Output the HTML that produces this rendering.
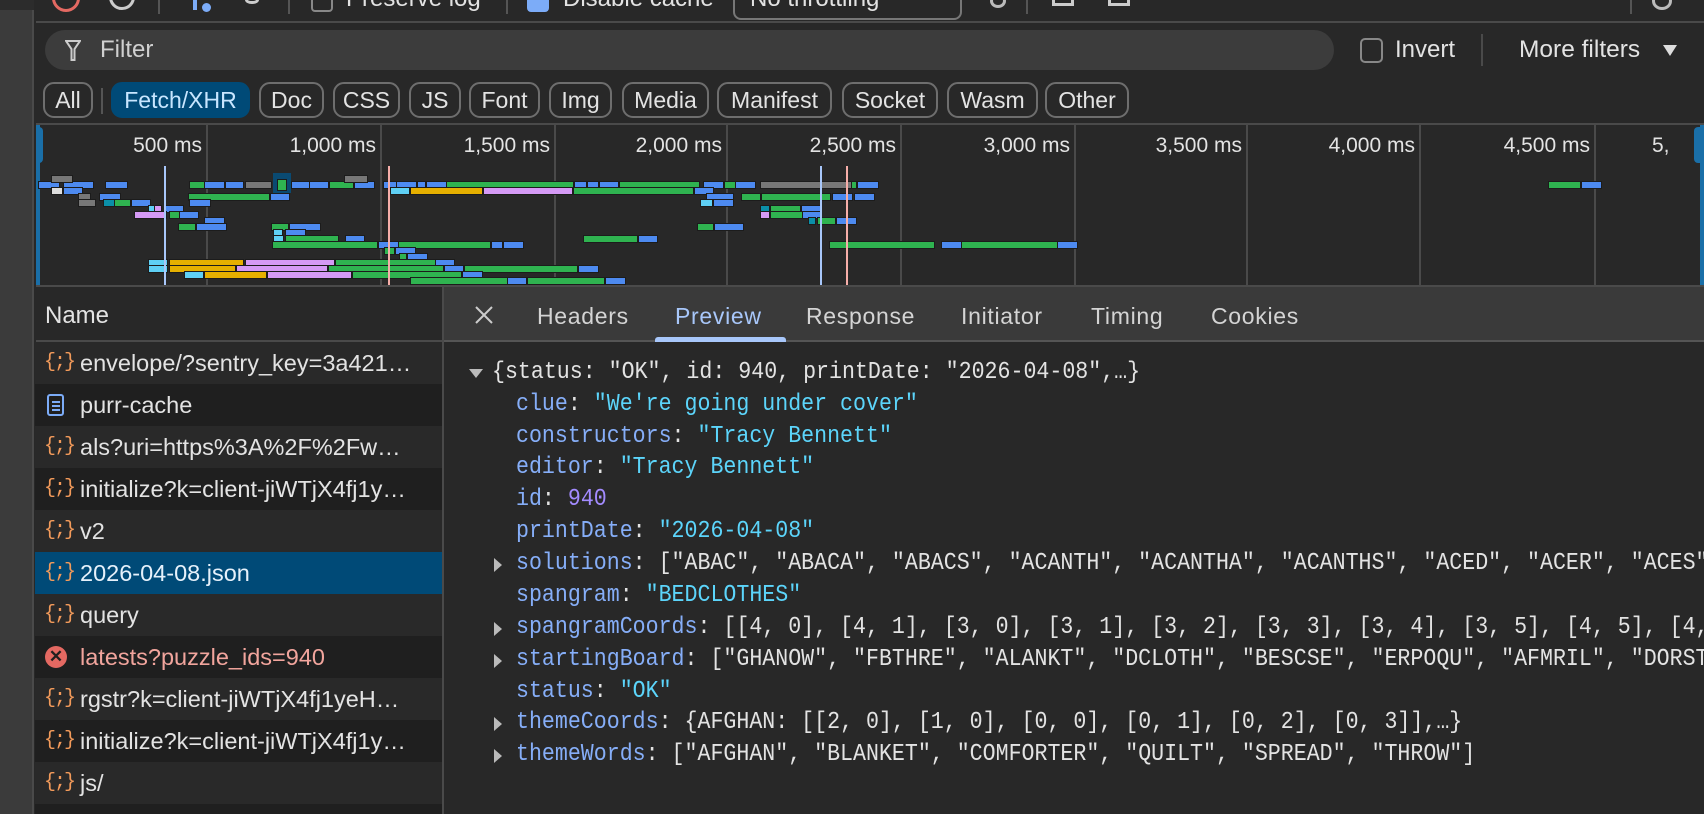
<!DOCTYPE html>
<html><head><meta charset="utf-8"><style>
*{box-sizing:border-box;margin:0;padding:0}
html,body{width:1704px;height:814px;overflow:hidden}
body{background:#282828;font-family:"Liberation Sans",sans-serif;color:#e3e3e3;position:relative}
.a{position:absolute}
.chip{position:absolute;top:82px;height:36px;border:2px solid #6e6e6e;border-radius:11px;font-size:23px;line-height:32px;text-align:center;color:#e3e3e3;white-space:nowrap}
.tl{position:absolute;top:125px;width:2px;height:161px;background:#4a4a4a}
.lab{position:absolute;top:134px;font-size:21px;text-align:right;width:130px;color:#e3e3e3}
.b{position:absolute;height:6px;outline:1px solid #1c1c1c}
.B{background:#4d8af0}.G{background:#2fb350}.C{background:#5fd0f5}.Y{background:#e6b000}.P{background:#d59af5}.R{background:#777}.T{background:#0b8fa8}.W{background:#ddd}
.row{position:absolute;left:35px;width:408px;height:42px;font-size:23.5px;line-height:42px;white-space:nowrap;overflow:hidden}
.row span.i{position:absolute;left:9px;top:0;color:#f29a5a;font-size:20px;font-family:"Liberation Mono",monospace;letter-spacing:-2px}
.row span.t{position:absolute;left:45px}
.tab{position:absolute;top:303px;font-size:23px;letter-spacing:0.7px;color:#d4d4d4}
.j{position:absolute;left:516px;font-family:"Liberation Mono",monospace;font-size:24px;white-space:nowrap;line-height:32px;transform:scaleX(0.9);transform-origin:0 0}
.k{color:#86aef8}.s{color:#5cd5fb}.n{color:#a38bff}
.tri{position:absolute;left:494px;width:0;height:0;border-top:7px solid transparent;border-bottom:7px solid transparent;border-left:8px solid #bbb}
</style></head><body>
<div class="a" style="left:0;top:0;width:34px;height:814px;background:#3b3b3b;border-right:2px solid #4a4a4a"></div>
<div class="a" style="left:0;top:0;width:34px;height:10px;background:#2c2c2c"></div>
<div class="a" style="left:36px;top:0;width:1668px;height:23px;background:#282828;border-bottom:2px solid #4a4a4a"></div>
<div class="a" style="left:52px;top:-16px;width:28px;height:28px;border:3px solid #e46962;border-radius:50%"></div>
<div class="a" style="left:109px;top:-16px;width:26px;height:26px;border:3px solid #ccc;border-radius:50%"></div>
<div class="a" style="left:158px;top:0;width:2px;height:14px;background:#555"></div>
<div class="a" style="left:193px;top:-2px;width:4px;height:12px;background:#7cacf8"></div>
<div class="a" style="left:202px;top:3px;width:9px;height:9px;background:#7cacf8;border-radius:50%"></div>
<div class="a" style="left:245px;top:-4px;width:14px;height:8px;border:3px solid #ccc;border-radius:50%"></div>
<div class="a" style="left:288px;top:0;width:2px;height:14px;background:#555"></div>
<div class="a" style="left:311px;top:-10px;width:22px;height:22px;border:2px solid #888;border-radius:4px"></div>
<div class="a" style="left:346px;top:-15px;font-size:24px">Preserve log</div>
<div class="a" style="left:506px;top:0;width:2px;height:14px;background:#555"></div>
<div class="a" style="left:527px;top:-10px;width:22px;height:22px;background:#7cacf8;border-radius:4px"></div>
<div class="a" style="left:563px;top:-15px;font-size:24px">Disable cache</div>
<div class="a" style="left:733px;top:-10px;width:229px;height:30px;border:2px solid #777;border-radius:8px"></div>
<div class="a" style="left:750px;top:-15px;font-size:24px">No throttling</div>
<div class="a" style="left:990px;top:-6px;width:16px;height:14px;border:3px solid #bbb;border-radius:50%"></div>
<div class="a" style="left:1026px;top:0;width:2px;height:14px;background:#555"></div>
<div class="a" style="left:1052px;top:-4px;width:22px;height:10px;border:3px solid #ccc;border-top:none"></div>
<div class="a" style="left:1108px;top:-4px;width:22px;height:10px;border:3px solid #ccc;border-top:none"></div>
<div class="a" style="left:1630px;top:0;width:2px;height:14px;background:#555"></div>
<div class="a" style="left:1652px;top:-8px;width:20px;height:18px;border:3px solid #bbb;border-radius:50%"></div>
<div class="a" style="left:45px;top:30px;width:1289px;height:40px;background:#3c3c3c;border-radius:20px"></div>
<svg class="a" style="left:65px;top:40px" width="16" height="22" viewBox="0 0 16 22"><path d="M1 1h14l-5.5 8v11h-3V9z" fill="none" stroke="#ccc" stroke-width="2"/></svg>
<div class="a" style="left:100px;top:36px;font-size:24px;color:#d0d0d0">Filter</div>
<div class="a" style="left:1360px;top:38px;width:23px;height:25px;border:2px solid #888;border-radius:5px"></div>
<div class="a" style="left:1395px;top:36px;font-size:24px">Invert</div>
<div class="a" style="left:1481px;top:34px;width:2px;height:32px;background:#4a4a4a"></div>
<div class="a" style="left:1519px;top:36px;font-size:24.5px">More filters</div>
<div class="a" style="left:1663px;top:45px;border-left:7px solid transparent;border-right:7px solid transparent;border-top:11px solid #ddd"></div>
<div class="chip" style="left:43px;width:50px">All</div>
<div class="a" style="left:101px;top:88px;width:2px;height:26px;background:#555"></div>
<div class="chip" style="left:111px;width:139px;background:#004a77;border-color:#004a77;color:#c8e6ff">Fetch/XHR</div>
<div class="chip" style="left:259px;width:65px">Doc</div>
<div class="chip" style="left:333px;width:67px">CSS</div>
<div class="chip" style="left:409px;width:52px">JS</div>
<div class="chip" style="left:469px;width:71px">Font</div>
<div class="chip" style="left:549px;width:63px">Img</div>
<div class="chip" style="left:622px;width:87px">Media</div>
<div class="chip" style="left:717px;width:115px">Manifest</div>
<div class="chip" style="left:842px;width:96px">Socket</div>
<div class="chip" style="left:947px;width:91px">Wasm</div>
<div class="chip" style="left:1045px;width:84px">Other</div>
<div class="a" style="left:36px;top:123px;width:1668px;height:2px;background:#4a4a4a"></div>
<div class="tl" style="left:206px"></div><div class="tl" style="left:380px"></div><div class="tl" style="left:554px"></div><div class="tl" style="left:726px"></div><div class="tl" style="left:900px"></div><div class="tl" style="left:1074px"></div><div class="tl" style="left:1246px"></div><div class="tl" style="left:1419px"></div><div class="tl" style="left:1594px"></div>
<div class="lab" style="left:72px">500 ms</div><div class="lab" style="left:246px">1,000 ms</div><div class="lab" style="left:420px">1,500 ms</div><div class="lab" style="left:592px">2,000 ms</div><div class="lab" style="left:766px">2,500 ms</div><div class="lab" style="left:940px">3,000 ms</div><div class="lab" style="left:1112px">3,500 ms</div><div class="lab" style="left:1285px">4,000 ms</div><div class="lab" style="left:1460px">4,500 ms</div>
<div class="a" style="left:1652px;top:134px;font-size:21px">5,</div>
<div class="a" style="left:36px;top:125px;width:4px;height:161px;background:#1a6fa8"></div>
<div class="a" style="left:36px;top:127px;width:7px;height:36px;background:#1a6fa8;border-radius:0 4px 4px 0"></div>
<div class="a" style="left:1694px;top:127px;width:10px;height:36px;background:#1a6fa8;border-radius:4px 0 0 4px"></div>
<div class="a" style="left:1700px;top:125px;width:4px;height:161px;background:#1a6fa8"></div>
<div class="a" style="left:273px;top:173px;width:18px;height:20px;background:#0a4a72"></div>
<div class="b B" style="left:39px;top:182px;width:20px"></div><div class="b B" style="left:64px;top:182px;width:29px"></div><div class="b B" style="left:106px;top:182px;width:21px"></div><div class="b G" style="left:190px;top:182px;width:14px"></div><div class="b B" style="left:205px;top:182px;width:19px"></div><div class="b B" style="left:226px;top:182px;width:17px"></div><div class="b R" style="left:246px;top:182px;width:25px"></div><div class="b G" style="left:278px;top:180px;width:8px;height:10px"></div><div class="b B" style="left:292px;top:182px;width:17px"></div><div class="b B" style="left:310px;top:182px;width:18px"></div><div class="b G" style="left:330px;top:182px;width:23px"></div><div class="b B" style="left:355px;top:182px;width:19px"></div><div class="b B" style="left:384px;top:182px;width:12px"></div><div class="b B" style="left:397px;top:182px;width:19px"></div><div class="b B" style="left:418px;top:182px;width:7px"></div><div class="b B" style="left:427px;top:182px;width:19px"></div><div class="b G" style="left:447px;top:182px;width:126px"></div><div class="b B" style="left:575px;top:182px;width:11px"></div><div class="b B" style="left:588px;top:182px;width:10px"></div><div class="b B" style="left:600px;top:182px;width:18px"></div><div class="b G" style="left:620px;top:182px;width:79px"></div><div class="b B" style="left:704px;top:182px;width:19px"></div><div class="b G" style="left:725px;top:182px;width:10px"></div><div class="b B" style="left:736px;top:182px;width:19px"></div><div class="b R" style="left:761px;top:182px;width:91px"></div><div class="b G" style="left:852px;top:182px;width:4px"></div><div class="b B" style="left:858px;top:182px;width:20px"></div><div class="b G" style="left:1549px;top:182px;width:31px"></div><div class="b B" style="left:1582px;top:182px;width:19px"></div>
<div class="b R" style="left:52px;top:176px;width:20px"></div><div class="b R" style="left:345px;top:176px;width:22px"></div>
<div class="b W" style="left:52px;top:188px;width:10px"></div><div class="b B" style="left:64px;top:188px;width:18px"></div><div class="b C" style="left:391px;top:188px;width:18px"></div><div class="b Y" style="left:411px;top:188px;width:71px"></div><div class="b P" style="left:484px;top:188px;width:88px"></div><div class="b G" style="left:574px;top:188px;width:119px"></div><div class="b B" style="left:695px;top:188px;width:18px"></div>
<div class="b R" style="left:79px;top:194px;width:11px"></div><div class="b B" style="left:100px;top:194px;width:20px"></div><div class="b G" style="left:189px;top:194px;width:80px"></div><div class="b B" style="left:271px;top:194px;width:18px"></div><div class="b B" style="left:707px;top:194px;width:26px"></div><div class="b G" style="left:742px;top:194px;width:18px"></div><div class="b G" style="left:762px;top:194px;width:68px"></div><div class="b B" style="left:833px;top:194px;width:19px"></div><div class="b B" style="left:855px;top:194px;width:19px"></div>
<div class="b R" style="left:79px;top:200px;width:16px"></div><div class="b T" style="left:104px;top:200px;width:10px"></div><div class="b G" style="left:115px;top:200px;width:15px"></div><div class="b B" style="left:132px;top:200px;width:18px"></div><div class="b B" style="left:190px;top:200px;width:20px"></div><div class="b C" style="left:701px;top:200px;width:11px"></div><div class="b B" style="left:714px;top:200px;width:19px"></div>
<div class="b C" style="left:149px;top:206px;width:5px"></div><div class="b P" style="left:155px;top:206px;width:6px"></div><div class="b B" style="left:166px;top:206px;width:17px"></div><div class="b T" style="left:761px;top:206px;width:8px"></div><div class="b G" style="left:771px;top:206px;width:29px"></div><div class="b B" style="left:802px;top:206px;width:18px"></div>
<div class="b P" style="left:135px;top:212px;width:31px"></div><div class="b G" style="left:170px;top:212px;width:9px"></div><div class="b B" style="left:180px;top:212px;width:18px"></div><div class="b P" style="left:761px;top:212px;width:8px"></div><div class="b G" style="left:771px;top:212px;width:31px"></div><div class="b B" style="left:803px;top:212px;width:18px"></div>
<div class="b B" style="left:205px;top:218px;width:19px"></div><div class="b T" style="left:809px;top:218px;width:6px"></div><div class="b G" style="left:818px;top:218px;width:17px"></div><div class="b B" style="left:837px;top:218px;width:19px"></div>
<div class="b G" style="left:179px;top:224px;width:16px"></div><div class="b B" style="left:197px;top:224px;width:29px"></div><div class="b G" style="left:272px;top:224px;width:16px"></div><div class="b B" style="left:290px;top:224px;width:30px"></div><div class="b G" style="left:698px;top:224px;width:15px"></div><div class="b B" style="left:715px;top:224px;width:28px"></div>
<div class="b C" style="left:274px;top:230px;width:8px"></div><div class="b B" style="left:286px;top:230px;width:19px"></div>
<div class="b C" style="left:274px;top:236px;width:9px"></div><div class="b G" style="left:286px;top:236px;width:52px"></div><div class="b B" style="left:346px;top:236px;width:18px"></div><div class="b G" style="left:584px;top:236px;width:53px"></div><div class="b B" style="left:639px;top:236px;width:18px"></div>
<div class="b G" style="left:273px;top:242px;width:104px"></div><div class="b B" style="left:379px;top:242px;width:19px"></div><div class="b G" style="left:399px;top:242px;width:91px"></div><div class="b B" style="left:492px;top:242px;width:10px"></div><div class="b B" style="left:504px;top:242px;width:19px"></div><div class="b G" style="left:830px;top:242px;width:104px"></div><div class="b B" style="left:942px;top:242px;width:19px"></div><div class="b G" style="left:962px;top:242px;width:95px"></div><div class="b B" style="left:1058px;top:242px;width:19px"></div>
<div class="b G" style="left:385px;top:248px;width:9px"></div><div class="b B" style="left:396px;top:248px;width:19px"></div>
<div class="b G" style="left:400px;top:254px;width:6px"></div><div class="b B" style="left:408px;top:254px;width:19px"></div>
<div class="b C" style="left:149px;top:260px;width:18px"></div><div class="b Y" style="left:170px;top:260px;width:73px"></div><div class="b P" style="left:246px;top:260px;width:88px"></div><div class="b G" style="left:336px;top:260px;width:99px"></div><div class="b B" style="left:436px;top:260px;width:18px"></div>
<div class="b C" style="left:149px;top:266px;width:18px"></div><div class="b Y" style="left:170px;top:266px;width:65px"></div><div class="b P" style="left:237px;top:266px;width:90px"></div><div class="b G" style="left:329px;top:266px;width:114px"></div><div class="b B" style="left:445px;top:266px;width:18px"></div><div class="b G" style="left:465px;top:266px;width:112px"></div><div class="b B" style="left:579px;top:266px;width:19px"></div>
<div class="b C" style="left:185px;top:272px;width:18px"></div><div class="b Y" style="left:205px;top:272px;width:61px"></div><div class="b P" style="left:268px;top:272px;width:83px"></div><div class="b G" style="left:353px;top:272px;width:108px"></div><div class="b B" style="left:463px;top:272px;width:19px"></div>
<div class="b G" style="left:411px;top:278px;width:96px"></div><div class="b B" style="left:508px;top:278px;width:18px"></div><div class="b G" style="left:528px;top:278px;width:76px"></div><div class="b B" style="left:606px;top:278px;width:19px"></div>
<div class="a" style="left:164px;top:166px;width:2px;height:120px;background:#a8c7fa"></div>
<div class="a" style="left:388px;top:166px;width:2px;height:120px;background:#f6aea9"></div>
<div class="a" style="left:820px;top:166px;width:2px;height:120px;background:#a8c7fa"></div>
<div class="a" style="left:846px;top:166px;width:2px;height:120px;background:#f6aea9"></div>
<div class="a" style="left:36px;top:285px;width:1668px;height:2px;background:#4a4a4a"></div>
<div class="a" style="left:36px;top:287px;width:407px;height:55px;background:#282828;border-bottom:2px solid #4a4a4a"></div>
<div class="a" style="left:45px;top:302px;font-size:24px">Name</div>
<div class="row" style="top:342px;background:#292929"><span class="i">{;}</span><span class="t">envelope/?sentry_key=3a421…</span></div>
<div class="row" style="top:384px;background:#1f1f1f"><span class="a" style="left:12px;top:10px;width:17px;height:22px;border:2px solid #7cacf8;border-radius:3px;background:linear-gradient(#7cacf8,#7cacf8) 3px 5px/8px 2px no-repeat,linear-gradient(#7cacf8,#7cacf8) 3px 9px/8px 2px no-repeat,linear-gradient(#7cacf8,#7cacf8) 3px 13px/8px 2px no-repeat"></span><span class="t">purr-cache</span></div>
<div class="row" style="top:426px;background:#292929"><span class="i">{;}</span><span class="t">als?uri=https%3A%2F%2Fw…</span></div>
<div class="row" style="top:468px;background:#1f1f1f"><span class="i">{;}</span><span class="t">initialize?k=client-jiWTjX4fj1y…</span></div>
<div class="row" style="top:510px;background:#292929"><span class="i">{;}</span><span class="t">v2</span></div>
<div class="row" style="top:552px;background:#004a77;color:#e6f1fb"><span class="i">{;}</span><span class="t">2026-04-08.json</span></div>
<div class="row" style="top:594px;background:#292929"><span class="i">{;}</span><span class="t">query</span></div>
<div class="row" style="top:636px;background:#1f1f1f;color:#f2a59d"><span class="a" style="left:10px;top:10px;width:22px;height:22px;border-radius:50%;background:#e46962;color:#1f1f1f;font-size:17px;line-height:22px;text-align:center;font-weight:bold">✕</span><span class="t">latests?puzzle_ids=940</span></div>
<div class="row" style="top:678px;background:#292929"><span class="i">{;}</span><span class="t">rgstr?k=client-jiWTjX4fj1yeH…</span></div>
<div class="row" style="top:720px;background:#1f1f1f"><span class="i">{;}</span><span class="t">initialize?k=client-jiWTjX4fj1y…</span></div>
<div class="row" style="top:762px;background:#292929"><span class="i">{;}</span><span class="t">js/</span></div>
<div class="row" style="top:804px;background:#1f1f1f"></div>
<div class="a" style="left:442px;top:287px;width:2px;height:527px;background:#4a4a4a"></div>
<div class="a" style="left:444px;top:287px;width:1260px;height:55px;background:#3a3a3a;border-bottom:2px solid #555"></div>
<svg class="a" style="left:474px;top:305px" width="20" height="20" viewBox="0 0 20 20"><path d="M2 2L18 18M18 2L2 18" stroke="#ccc" stroke-width="2"/></svg>
<div class="tab" style="left:537px">Headers</div>
<div class="tab" style="left:675px;color:#a8c7fa">Preview</div>
<div class="a" style="left:655px;top:337px;width:131px;height:5px;background:#a8c7fa;border-radius:3px 3px 0 0"></div>
<div class="tab" style="left:806px">Response</div>
<div class="tab" style="left:961px">Initiator</div>
<div class="tab" style="left:1091px">Timing</div>
<div class="tab" style="left:1211px">Cookies</div>
<div class="a" style="left:469px;top:369px;border-left:7px solid transparent;border-right:7px solid transparent;border-top:9px solid #bbb"></div>
<div class="j" style="left:492px;top:357px">{status: "OK", id: 940, printDate: "2026-04-08",…}</div>
<div class="j" style="top:389px"><span class="k">clue</span>: <span class="s">"We're going under cover"</span></div>
<div class="j" style="top:421px"><span class="k">constructors</span>: <span class="s">"Tracy Bennett"</span></div>
<div class="j" style="top:452px"><span class="k">editor</span>: <span class="s">"Tracy Bennett"</span></div>
<div class="j" style="top:484px"><span class="k">id</span>: <span class="n">940</span></div>
<div class="j" style="top:516px"><span class="k">printDate</span>: <span class="s">"2026-04-08"</span></div>
<div class="tri" style="top:558px"></div>
<div class="j" style="top:548px"><span class="k">solutions</span>: ["ABAC", "ABACA", "ABACS", "ACANTH", "ACANTHA", "ACANTHS", "ACED", "ACER", "ACES"]</div>
<div class="j" style="top:580px"><span class="k">spangram</span>: <span class="s">"BEDCLOTHES"</span></div>
<div class="tri" style="top:622px"></div>
<div class="j" style="top:612px"><span class="k">spangramCoords</span>: [[4, 0], [4, 1], [3, 0], [3, 1], [3, 2], [3, 3], [3, 4], [3, 5], [4, 5], [4, 6]]</div>
<div class="tri" style="top:654px"></div>
<div class="j" style="top:644px"><span class="k">startingBoard</span>: ["GHANOW", "FBTHRE", "ALANKT", "DCLOTH", "BESCSE", "ERPOQU", "AFMRIL", "DORSTE"]</div>
<div class="j" style="top:676px"><span class="k">status</span>: <span class="s">"OK"</span></div>
<div class="tri" style="top:717px"></div>
<div class="j" style="top:707px"><span class="k">themeCoords</span>: {AFGHAN: [[2, 0], [1, 0], [0, 0], [0, 1], [0, 2], [0, 3]],…}</div>
<div class="tri" style="top:749px"></div>
<div class="j" style="top:739px"><span class="k">themeWords</span>: ["AFGHAN", "BLANKET", "COMFORTER", "QUILT", "SPREAD", "THROW"]</div>
</body></html>
